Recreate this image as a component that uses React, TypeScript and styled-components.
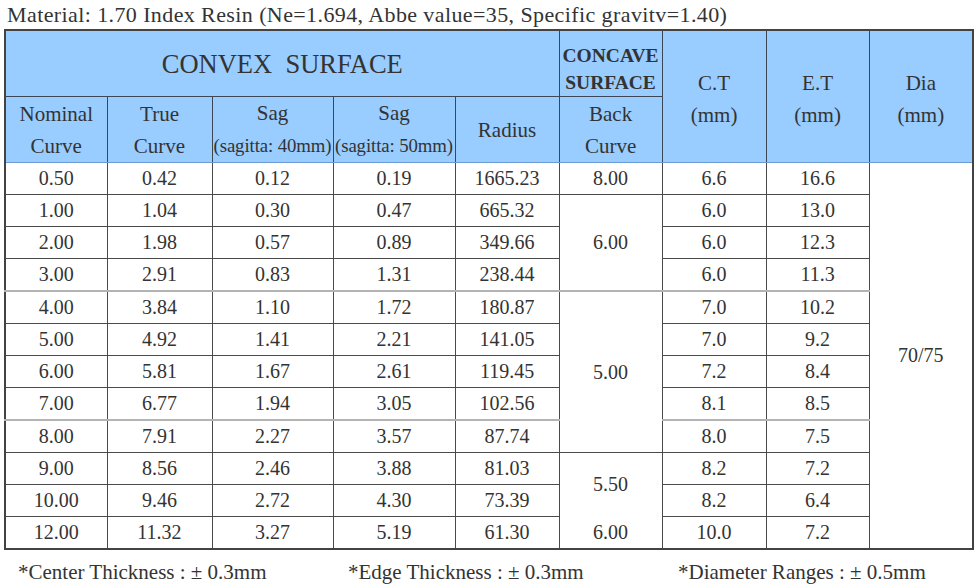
import React from 'react';
import styled, { createGlobalStyle } from 'styled-components';

const GlobalStyle = createGlobalStyle`
  html, body {
    margin: 0;
    padding: 0;
    background: #ffffff;
  }
  body {
    font-family: 'Liberation Serif', 'DejaVu Serif', serif;
    color: #333333;
  }
`;

const Page = styled.div`
  width: 976px;
  height: 585px;
  overflow: hidden;
  padding: 0 3px 0 4px;
  box-sizing: border-box;
`;

const Title = styled.div`
  font-size: 22px;
  letter-spacing: 0.4px;
  line-height: 29px;
  height: 29px;
  padding-left: 3px;
  white-space: nowrap;
`;

const Table = styled.table`
  width: 969px;
  border-collapse: collapse;
  table-layout: fixed;
  border: 2px solid #434343;
`;

const HeadCell = styled.th<{ $bold?: boolean; $big?: boolean; $h?: number }>`
  background: #99ccff;
  border: 1px solid #3c4654;
  font-weight: ${({ $bold }) => ($bold ? 700 : 400)};
  font-size: ${({ $big, $bold }) => ($big ? '26.5px' : $bold ? '19.5px' : '21px')};
  line-height: ${({ $bold }) => ($bold ? '27px' : '32px')};
  height: ${({ $h }) => ($h ? `${$h}px` : 'auto')};
  padding: ${({ $bold }) => ($bold ? '11px 0 0' : '0')};
  box-sizing: border-box;
  text-align: center;
  vertical-align: middle;
  white-space: pre;
  color: #333333;
`;

const SubHead = styled(HeadCell)`
  border-bottom: 1px solid #6b9bd0;
`;

const UnitHead = styled(SubHead)`
  padding-top: 4px;
`;

const Small = styled.span`
  font-size: 18.8px;
  letter-spacing: -0.1px;
`;

const Cell = styled.td<{ $gray?: boolean; $noBottom?: boolean; $noTop?: boolean }>`
  border: 1px solid #4a4a4a;
  border-top: ${({ $gray, $noTop }) =>
    $noTop ? 'none' : $gray ? '2px solid #b3b3b3' : '1px solid #4a4a4a'};
  ${({ $noBottom }) => ($noBottom ? 'border-bottom: none;' : '')}
  height: 31px;
  padding: 0;
  font-size: 20px;
  line-height: 31px;
  text-align: center;
  vertical-align: middle;
  color: #333333;
`;

const Footer = styled.div`
  display: flex;
  padding: 10px 0 0 14px;
  font-size: 21px;
  line-height: 24px;
`;

const Note = styled.div`
  flex: 0 0 330px;
  white-space: nowrap;
`;

type Row = {
  nominal: string;
  trueCurve: string;
  sag40: string;
  sag50: string;
  radius: string;
  ct: string;
  et: string;
  gray?: boolean;
};

const rows: Row[] = [
  { nominal: '0.50', trueCurve: '0.42', sag40: '0.12', sag50: '0.19', radius: '1665.23', ct: '6.6', et: '16.6' },
  { nominal: '1.00', trueCurve: '1.04', sag40: '0.30', sag50: '0.47', radius: '665.32', ct: '6.0', et: '13.0' },
  { nominal: '2.00', trueCurve: '1.98', sag40: '0.57', sag50: '0.89', radius: '349.66', ct: '6.0', et: '12.3' },
  { nominal: '3.00', trueCurve: '2.91', sag40: '0.83', sag50: '1.31', radius: '238.44', ct: '6.0', et: '11.3' },
  { nominal: '4.00', trueCurve: '3.84', sag40: '1.10', sag50: '1.72', radius: '180.87', ct: '7.0', et: '10.2', gray: true },
  { nominal: '5.00', trueCurve: '4.92', sag40: '1.41', sag50: '2.21', radius: '141.05', ct: '7.0', et: '9.2' },
  { nominal: '6.00', trueCurve: '5.81', sag40: '1.67', sag50: '2.61', radius: '119.45', ct: '7.2', et: '8.4' },
  { nominal: '7.00', trueCurve: '6.77', sag40: '1.94', sag50: '3.05', radius: '102.56', ct: '8.1', et: '8.5' },
  { nominal: '8.00', trueCurve: '7.91', sag40: '2.27', sag50: '3.57', radius: '87.74', ct: '8.0', et: '7.5', gray: true },
  { nominal: '9.00', trueCurve: '8.56', sag40: '2.46', sag50: '3.88', radius: '81.03', ct: '8.2', et: '7.2' },
  { nominal: '10.00', trueCurve: '9.46', sag40: '2.72', sag50: '4.30', radius: '73.39', ct: '8.2', et: '6.4' },
  { nominal: '12.00', trueCurve: '11.32', sag40: '3.27', sag50: '5.19', radius: '61.30', ct: '10.0', et: '7.2' },
];

// back curve cells: row index -> span / value
const backCurve: Record<number, { value: string; span: number; gray?: boolean; noBottom?: boolean; noTop?: boolean }> = {
  0: { value: '8.00', span: 1 },
  1: { value: '6.00', span: 3 },
  4: { value: '5.00', span: 5, gray: true },
  9: { value: '5.50', span: 2, noBottom: true },
  11: { value: '6.00', span: 1, noTop: true },
};

const widths = [102, 105, 121, 122, 104, 103, 104, 103, 104];

export default function App() {
  return (
    <Page>
      <GlobalStyle />
      <Title>Material: 1.70 Index Resin (Ne=1.694, Abbe value=35, Specific gravitv=1.40)</Title>
      <Table>
        <colgroup>
          {widths.map((w, i) => (
            <col key={i} style={{ width: w }} />
          ))}
        </colgroup>
        <thead>
          <tr>
            <HeadCell colSpan={5} $big $h={66}>CONVEX  SURFACE</HeadCell>
            <HeadCell $bold>{'CONCAVE\nSURFACE'}</HeadCell>
            <UnitHead rowSpan={2}>{'C.T\n(mm)'}</UnitHead>
            <UnitHead rowSpan={2}>{'E.T\n(mm)'}</UnitHead>
            <UnitHead rowSpan={2}>{'Dia\n(mm)'}</UnitHead>
          </tr>
          <tr>
            <SubHead $h={64}>{'Nominal\nCurve'}</SubHead>
            <SubHead>{'True\nCurve'}</SubHead>
            <SubHead>
              {'Sag\n'}
              <Small>(sagitta: 40mm)</Small>
            </SubHead>
            <SubHead>
              {'Sag\n'}
              <Small>(sagitta: 50mm)</Small>
            </SubHead>
            <SubHead>Radius</SubHead>
            <SubHead>{'Back\nCurve'}</SubHead>
          </tr>
        </thead>
        <tbody>
          {rows.map((r, i) => {
            const bc = backCurve[i];
            return (
              <tr key={r.nominal}>
                <Cell $gray={r.gray}>{r.nominal}</Cell>
                <Cell $gray={r.gray}>{r.trueCurve}</Cell>
                <Cell $gray={r.gray}>{r.sag40}</Cell>
                <Cell $gray={r.gray}>{r.sag50}</Cell>
                <Cell $gray={r.gray}>{r.radius}</Cell>
                {bc && (
                  <Cell rowSpan={bc.span} $gray={bc.gray} $noBottom={bc.noBottom} $noTop={bc.noTop}>
                    {bc.value}
                  </Cell>
                )}
                <Cell $gray={r.gray}>{r.ct}</Cell>
                <Cell $gray={r.gray}>{r.et}</Cell>
                {i === 0 && <Cell rowSpan={12}>70/75</Cell>}
              </tr>
            );
          })}
        </tbody>
      </Table>
      <Footer>
        <Note>*Center Thickness : ± 0.3mm</Note>
        <Note>*Edge Thickness : ± 0.3mm</Note>
        <Note>*Diameter Ranges : ± 0.5mm</Note>
      </Footer>
    </Page>
  );
}
